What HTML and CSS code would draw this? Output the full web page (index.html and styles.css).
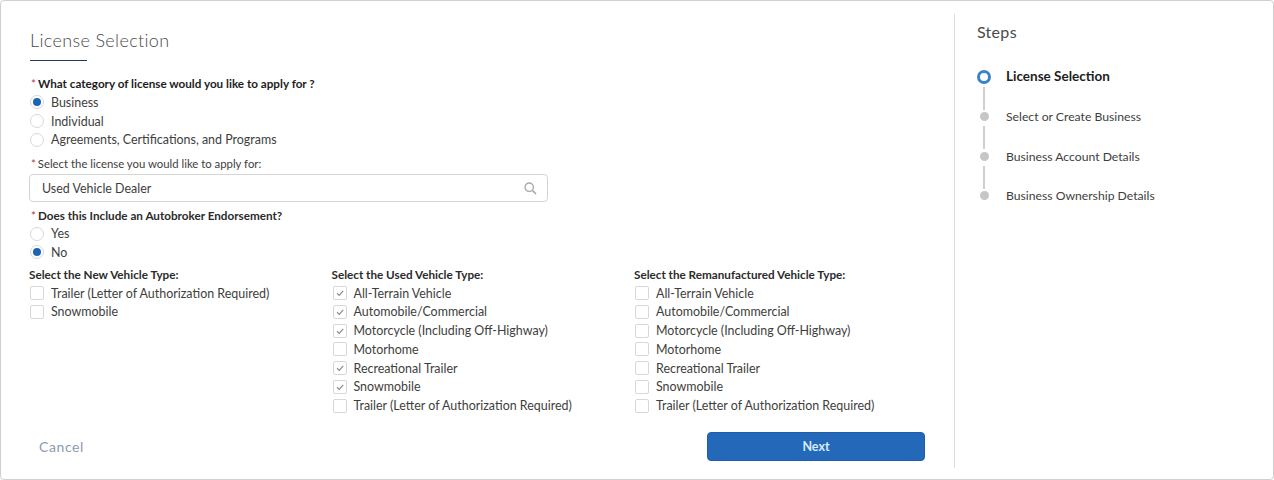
FILE: index.html
```html
<!DOCTYPE html>
<html lang="en">
<head>
  <meta charset="UTF-8" />
  <title>License Selection</title>
  <link rel="stylesheet" href="styles.css">
</head>
<body>
  <div class="card">
    <div class="main">
      <h1 class="title">License Selection</h1>
      <div class="title-rule"></div>

      <div class="label strong"><span class="req">*</span>What category of license would you like to apply for ?</div>
      <div class="option"><span class="radio on"></span>Business</div>
      <div class="option"><span class="radio"></span>Individual</div>
      <div class="option"><span class="radio"></span>Agreements, Certifications, and Programs</div>

      <div class="label small"><span class="req">*</span>Select the license you would like to apply for:</div>
      <div class="lookup">
        <span>Used Vehicle Dealer</span>
        <svg class="search" width="13" height="13" viewBox="0 0 13 13"><circle cx="5.2" cy="5.2" r="4.2" fill="none" stroke="#a8a8a8" stroke-width="1.3"/><path d="M8.4 8.4l3.6 3.6" stroke="#a8a8a8" stroke-width="1.6"/></svg>
      </div>

      <div class="label medium"><span class="req">*</span>Does this Include an Autobroker Endorsement?</div>
      <div class="option"><span class="radio"></span>Yes</div>
      <div class="option"><span class="radio on"></span>No</div>

      <div class="types">
        <div class="type-col">
          <div class="type-title">Select the New Vehicle Type:</div>
          <div class="option"><span class="check"></span>Trailer (Letter of Authorization Required)</div>
          <div class="option"><span class="check"></span>Snowmobile</div>
        </div>
        <div class="type-col">
          <div class="type-title">Select the Used Vehicle Type:</div>
          <div class="option"><span class="check on"><svg width="10" height="10" viewBox="0 0 10 10"><path d="M2 5.2l2.2 2.2L8.2 2.8" fill="none" stroke="#7d8794" stroke-width="1.1"/></svg></span>All-Terrain Vehicle</div>
          <div class="option"><span class="check on"><svg width="10" height="10" viewBox="0 0 10 10"><path d="M2 5.2l2.2 2.2L8.2 2.8" fill="none" stroke="#7d8794" stroke-width="1.1"/></svg></span>Automobile/Commercial</div>
          <div class="option"><span class="check on"><svg width="10" height="10" viewBox="0 0 10 10"><path d="M2 5.2l2.2 2.2L8.2 2.8" fill="none" stroke="#7d8794" stroke-width="1.1"/></svg></span>Motorcycle (Including Off-Highway)</div>
          <div class="option"><span class="check"></span>Motorhome</div>
          <div class="option"><span class="check on"><svg width="10" height="10" viewBox="0 0 10 10"><path d="M2 5.2l2.2 2.2L8.2 2.8" fill="none" stroke="#7d8794" stroke-width="1.1"/></svg></span>Recreational Trailer</div>
          <div class="option"><span class="check on"><svg width="10" height="10" viewBox="0 0 10 10"><path d="M2 5.2l2.2 2.2L8.2 2.8" fill="none" stroke="#7d8794" stroke-width="1.1"/></svg></span>Snowmobile</div>
          <div class="option"><span class="check"></span>Trailer (Letter of Authorization Required)</div>
        </div>
        <div class="type-col">
          <div class="type-title">Select the Remanufactured Vehicle Type:</div>
          <div class="option"><span class="check"></span>All-Terrain Vehicle</div>
          <div class="option"><span class="check"></span>Automobile/Commercial</div>
          <div class="option"><span class="check"></span>Motorcycle (Including Off-Highway)</div>
          <div class="option"><span class="check"></span>Motorhome</div>
          <div class="option"><span class="check"></span>Recreational Trailer</div>
          <div class="option"><span class="check"></span>Snowmobile</div>
          <div class="option"><span class="check"></span>Trailer (Letter of Authorization Required)</div>
        </div>
      </div>

      <div class="actions">
        <a class="cancel">Cancel</a>
        <button class="next">Next</button>
      </div>
    </div>

    <div class="steps">
      <div class="steps-title">Steps</div>
      <div class="step current"><span class="dot"></span>License Selection</div>
      <div class="step"><span class="dot"></span>Select or Create Business</div>
      <div class="step"><span class="dot"></span>Business Account Details</div>
      <div class="step last"><span class="dot"></span>Business Ownership Details</div>
    </div>
  </div>
</body>
</html>
```

FILE: styles.css
```css
* {
  box-sizing: border-box;
}

html, body {
  margin: 0;
  height: 480px;
  overflow: hidden;
}

body {
  font-family: Lato, 'Open Sans', sans-serif;
  font-size: 12.45px;
  color: #3e3e3c;
  background: #fff;
}

.card {
  height: 480px;
  display: flex;
  border: 1px solid #cfcfcf;
  border-radius: 4px;
  padding-top: 13px;
}

.main {
  width: 954px;
  height: 454px;
  padding: 14px 29px 0 28px;
  border-right: 1px solid #dcdcdc;
}

.title {
  margin: 0 0 0 1px;
  font-size: 18px;
  font-weight: 300;
  line-height: 24px;
  letter-spacing: 0.35px;
  color: #4a4a4a;
}

.title-rule {
  width: 57px;
  height: 1px;
  margin: 8px 0 0 1px;
  background: #1f3a63;
}

.label {
  line-height: 18px;
  color: #1d1d1d;
}

.strong {
  margin-top: 13px;
  padding-bottom: 1px;
  font-size: 11.7px;
  font-weight: 700;
}

.small {
  margin-top: 6px;
  font-size: 11.35px;
  color: #3e3e3c;
}

.medium {
  margin-top: 4px;
  height: 18px;
  font-size: 11.7px;
  font-weight: 700;
  color: #2b2b2b;
}

.req {
  color: #c23934;
  margin: 0 2px 0 2px;
  font-weight: 400;
}

.option {
  display: flex;
  align-items: center;
  height: 18.75px;
  white-space: nowrap;
}

.radio, .check {
  flex: none;
  width: 14px;
  height: 14px;
  margin: 0 7px 0 1px;
  background: #fff;
  border: 1px solid #d8d8d8;
}

.radio {
  border-radius: 50%;
}

.radio.on {
  display: flex;
  align-items: center;
  justify-content: center;
}

.radio.on::before {
  content: "";
  width: 8px;
  height: 8px;
  border-radius: 50%;
  background: #1b65b8;
}

.check {
  border-radius: 2px;
  display: flex;
  align-items: center;
  justify-content: center;
}

.lookup {
  display: flex;
  align-items: center;
  justify-content: space-between;
  width: 519px;
  height: 28px;
  margin-top: 1px;
  padding: 0 10px 0 12px;
  border: 1px solid #d4d4d4;
  border-radius: 4px;
}

.types {
  display: grid;
  grid-template-columns: 302.5px 302.5px 1fr;
  margin-top: 3px;
}

.type-title {
  padding-bottom: 1px;
  font-size: 11.7px;
  font-weight: 700;
  line-height: 18px;
  color: #2b2b2b;
}

.actions {
  display: flex;
  justify-content: space-between;
  align-items: center;
  margin-top: 17px;
  padding-left: 10px;
}

.cancel {
  padding-bottom: 1px;
  font-size: 14px;
  letter-spacing: 0.6px;
  color: #8b9bb0;
}

.next {
  width: 218px;
  height: 29px;
  border: 1px solid #1f5fa8;
  border-radius: 4px;
  background: #2468b9;
  color: #d8ecfa;
  font-family: Lato, 'Open Sans', sans-serif;
  font-size: 12.5px;
  font-weight: 700;
}

.steps {
  flex: 1;
  padding: 7px 0 0 22px;
}

.steps-title {
  font-size: 16px;
  line-height: 22px;
  letter-spacing: 0.3px;
  color: #4a4a4a;
  margin-bottom: 15px;
}

.step {
  position: relative;
  display: flex;
  align-items: center;
  height: 39.3px;
  padding-left: 29px;
  font-size: 12.2px;
  white-space: nowrap;
}

.step::after {
  content: "";
  position: absolute;
  left: 6px;
  top: 29px;
  width: 2px;
  height: 23px;
  background: #cfcfcf;
}

.step.last::after {
  display: none;
}

.dot {
  position: absolute;
  left: 3px;
  top: 15px;
  width: 9px;
  height: 9px;
  border-radius: 50%;
  background: #c6c6c6;
}

.step.current {
  padding-bottom: 3px;
  font-size: 13.5px;
  font-weight: 700;
  color: #1d1d1d;
}

.step.current .dot {
  left: 0;
  top: 12px;
  width: 14px;
  height: 14px;
  background: #fff;
  border: 3px solid #3b82c9;
}
```
